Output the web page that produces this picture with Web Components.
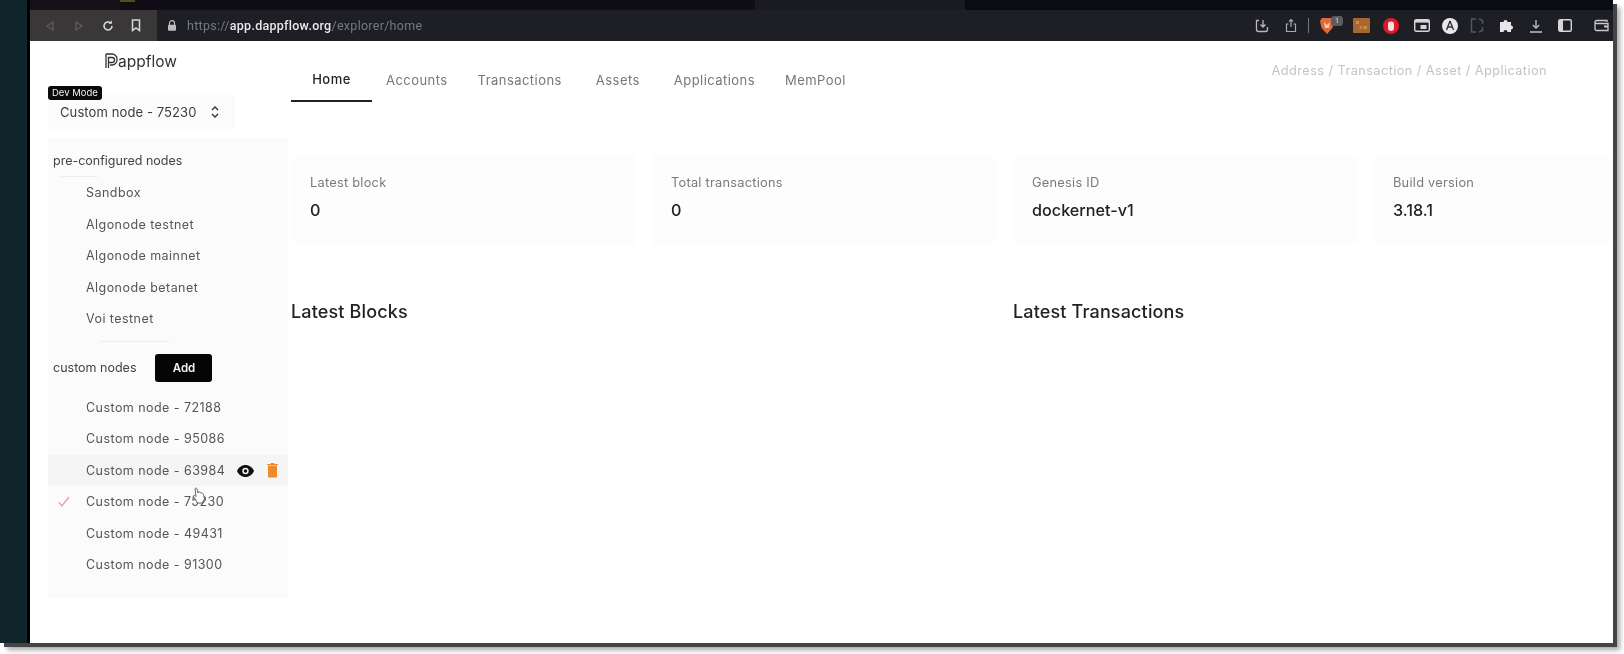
<!DOCTYPE html>
<html lang="en">
<head>
<meta charset="utf-8">
<title>Dappflow explorer</title>
<style>
  html, body { margin: 0; background: #fff; }
  body { font-family: Inter, "Liberation Sans", sans-serif; width: 1624px; height: 654px; overflow: hidden; }
</style>
</head>
<body>
<app-frame>
  <browser-bar></browser-bar>
  <side-bar slot="side">
    <dapp-logo></dapp-logo>
    <node-select>Custom node - 75230</node-select>
    <node-panel>
      <span slot="preset-title">pre-configured nodes</span>
      <node-item slot="preset">Sandbox</node-item>
      <node-item slot="preset">Algonode testnet</node-item>
      <node-item slot="preset">Algonode mainnet</node-item>
      <node-item slot="preset">Algonode betanet</node-item>
      <node-item slot="preset">Voi testnet</node-item>
      <span slot="custom-title">custom nodes</span>
      <node-item>Custom node - 72188</node-item>
      <node-item>Custom node - 95086</node-item>
      <node-item hovered>Custom node - 63984</node-item>
      <node-item selected>Custom node - 75230</node-item>
      <node-item>Custom node - 49431</node-item>
      <node-item>Custom node - 91300</node-item>
    </node-panel>
  </side-bar>
  <explorer-home slot="main"></explorer-home>
</app-frame>

<script>
class AppFrame extends HTMLElement {
  constructor() {
    super();
    this.attachShadow({ mode: 'open' });
    this.shadowRoot.innerHTML = `
      <style>
        :host { display: block; width: 1613px; height: 643px; box-shadow: 4px 4px 0 #444, 7px 7px 5px rgba(0,0,0,.35); }
        .screen { display: flex; height: 100%; overflow: hidden; filter: blur(.4px); }
        .strip { width: 27px; flex: none; background: #10252b; border-right: 3px solid #000; }
        .window { flex: 1; min-width: 0; display: flex; flex-direction: column; background: #fff; }
        .body { flex: 1; min-height: 0; display: flex; }
      </style>
      <div class="screen">
        <div class="strip"></div>
        <div class="window">
          <slot></slot>
          <div class="body">
            <slot name="side"></slot>
            <slot name="main"></slot>
          </div>
        </div>
      </div>`;
  }
}
customElements.define('app-frame', AppFrame);

class BrowserBar extends HTMLElement {
  constructor() {
    super();
    this.attachShadow({ mode: 'open' });
    this.shadowRoot.innerHTML = `
      <style>
        :host { display: block; height: 41px; background: #0d0e13; filter: blur(.5px); }
        .tabs { height: 10px; display: flex; }
        .tabs i { display: block; height: 100%; }
        .bar { height: 31px; display: flex; align-items: center; background: #1e1f25; }
        .nav { width: 127px; height: 100%; flex: none; display: flex; align-items: center; background: #3a3739; }
        .url { font: 12.500px Roboto, sans-serif; letter-spacing: .28px; color: #77787c; margin-left: 10px; white-space: nowrap; }
        .url b { font-weight: 500; color: #e8e8ea; }
        svg { display: block; flex: none; }
        .tools { margin-left: auto; display: flex; align-items: center; padding-right: 4px; }
        .sep { width: 1px; height: 15px; background: #77787c; }
      </style>
      <div class="tabs">
        <i style="width:90px;background:#15101a"></i><i style="width:15px;background:#5a4a1e;height:2px"></i>
        <i style="width:620px;background:#100d16"></i><i style="width:210px;background:#1a1b20"></i>
        <i style="flex:1;background:#0b0c12"></i>
      </div>
      <div class="bar">
        <div class="nav">
          <svg style="margin-left:14px" width="12" height="12" viewBox="0 0 12 12" fill="none" stroke="#5c5a5c" stroke-width="1.4"><path d="M9 2 3 6l6 4z"/></svg>
          <svg style="margin-left:17px" width="12" height="12" viewBox="0 0 12 12" fill="none" stroke="#5c5a5c" stroke-width="1.4"><path d="M3 2l6 4-6 4z"/></svg>
          <svg style="margin-left:17px" width="12" height="12" viewBox="0 0 12 12" fill="none" stroke="#d8d8da" stroke-width="1.6"><path d="M10 6a4 4 0 1 1-1.3-3"/><path d="M9.5 .8v2.6H6.9" fill="#d8d8da" stroke-width=".8"/></svg>
          <svg style="margin-left:17px" width="10" height="13" viewBox="0 0 10 13" fill="none" stroke="#d8d8da" stroke-width="1.5"><path d="M1.5 1h7v10.5L5 9l-3.500 2.500z"/></svg>
        </div>
        <svg style="margin-left:10px" width="10" height="11" viewBox="0 0 10 11"><path d="M2.500 5V3.200a2.500 2.500 0 0 1 5 0V5" fill="none" stroke="#bdbdc0" stroke-width="1.200"/><rect x="1" y="4.700" width="8" height="6" rx="1" fill="#bdbdc0"/></svg>
        <div class="url">https://<b>app.dappflow.org</b>/explorer/home</div>
        <div class="tools">
          <svg width="14" height="14" viewBox="0 0 14 14" fill="none" stroke="#b9b9bc" stroke-width="1.300"><path d="M4 1.500H1.500v9a2 2 0 0 0 2 2h7a2 2 0 0 0 2-2V8"/><path d="M8 1v6.500M5.500 5.500 8 8l2.500-2.500"/></svg>
          <svg style="margin-left:16px" width="12" height="15" viewBox="0 0 12 15" fill="none" stroke="#a9a9ac" stroke-width="1.200"><path d="M3.500 6H1.500v7.500h9V6h-2"/><path d="M6 9V1.500M4 3.500l2-2 2 2"/></svg>
          <div class="sep" style="margin-left:11px"></div>
          <svg style="margin-left:10px" width="16" height="18" viewBox="0 0 16 18"><path d="M3 1h10l2 3-1.500 7L8 17l-5.500-6L1 4z" fill="#e2683a"/><path d="M5 5l3 3 3-3-1 6H6z" fill="#f3cdb8"/></svg>
          <div style="width:12px;height:10px;margin:-10px 0 0 -4px;border-radius:3px;background:#5b5c62;color:#ddd;font:8px/10px Roboto,sans-serif;text-align:center">1</div>
          <svg style="margin-left:10px" width="17" height="15" viewBox="0 0 17 15"><rect width="17" height="15" rx="1" fill="#a8672f"/><path d="M3 3h3v3H3zM10 8h4v3h-4zM6 9l2 3 1-5z" fill="#cf8a45"/></svg>
          <svg style="margin-left:13px" width="16" height="16" viewBox="0 0 16 16"><circle cx="8" cy="8" r="8" fill="#e0182b"/><path d="M5 5.500a3 2 0 0 1 6 0V10a3 3 0 0 1-6 0z" fill="#f6dede"/></svg>
          <svg style="margin-left:15px" width="16" height="13" viewBox="0 0 16 13"><rect x=".7" y=".7" width="14.600" height="11.600" rx="1.500" fill="none" stroke="#d6d6d8" stroke-width="1.400"/><rect x="1" y="1" width="14" height="2.600" fill="#d6d6d8"/><rect x="6.500" y="6" width="6" height="4" fill="#d6d6d8"/></svg>
          <svg style="margin-left:12px" width="16" height="16" viewBox="0 0 16 16"><circle cx="8" cy="8" r="8" fill="#e8e8ea"/><path d="M8 3 4.500 12M8 3l3.500 9M6 9h4" fill="none" stroke="#2a2b30" stroke-width="1.300"/></svg>
          <svg style="margin-left:12px" width="14" height="15" viewBox="0 0 14 15" fill="none" stroke="#55565b" stroke-width="1.500"><path d="M6 1H1.500v13H6M9 1l3.500 1.500V6M12.500 9v3.500L9 14"/></svg>
          <svg style="margin-left:15px" width="15" height="15" viewBox="0 0 15 15"><path d="M1 4h3.500a2 2 0 1 1 4 0H12v3.500a2 2 0 1 1 0 4V14H8.500a2 2 0 1 0-4 0H1z" fill="#e6e6e8"/></svg>
          <svg style="margin-left:15px" width="14" height="14" viewBox="0 0 14 14" fill="none" stroke="#c2c2c5" stroke-width="1.300"><path d="M7 1v8M3.800 6 7 9.200 10.200 6M1 13h12"/></svg>
          <svg style="margin-left:15px" width="14" height="13" viewBox="0 0 14 13"><rect x=".7" y=".7" width="12.600" height="11.600" rx="1.500" fill="none" stroke="#d6d6d8" stroke-width="1.400"/><rect x="1" y="1" width="4" height="11" fill="#d6d6d8"/></svg>
          <svg style="margin-left:22px" width="15" height="13" viewBox="0 0 15 13" fill="none" stroke="#c9c9cc" stroke-width="1.300"><path d="M13 3V1.500H2.500a1.500 1.500 0 0 0 0 3H14v7H2.500A1.500 1.500 0 0 1 1 10V3"/><path d="M10 7.500h4" stroke-width="2"/></svg>
        </div>
      </div>`;
  }
}
customElements.define('browser-bar', BrowserBar);

class SideBar extends HTMLElement {
  constructor() {
    super();
    this.attachShadow({ mode: 'open' });
    this.shadowRoot.innerHTML = `
      <style>
        :host { display: flex; flex-direction: column; width: 260px; flex: none; }
      </style>
      <slot></slot>`;
  }
}
customElements.define('side-bar', SideBar);

class DappLogo extends HTMLElement {
  constructor() {
    super();
    this.attachShadow({ mode: 'open' });
    this.shadowRoot.innerHTML = `
      <style>
        :host { display: flex; align-items: center; height: 40px; padding-left: 75px; font-size: 15.500px; color: #333; }
        svg { display: block; margin-right: 0; }
      </style>
      <svg width="13" height="16" viewBox="0 0 13 16" fill="none" stroke="#333" stroke-width="1.300">
        <path d="M1 1h6a5 5 0 0 1 5 5v1a5 5 0 0 1-5 5H5"/><path d="M1 1v14M3.500 15V4.500h3.500a2.500 2.500 0 0 1 0 5H3.500"/>
      </svg>
      <span>appflow</span>`;
  }
}
customElements.define('dapp-logo', DappLogo);

class NodeSelect extends HTMLElement {
  constructor() {
    super();
    this.attachShadow({ mode: 'open' });
    this.shadowRoot.innerHTML = `
      <style>
        :host { display: flex; align-items: center; position: relative; margin: 14px 0 9px 18px; width: 175px; height: 34px; padding-left: 12px; background: #fbfbfb; font-size: 13px; letter-spacing: .1px; color: #3c3c3c; white-space: nowrap; }
        .badge { position: absolute; left: 0; top: -9px; padding: 0 4px; height: 14px; line-height: 14px; border-radius: 3px; background: #0a0a0a; color: #eee; font-size: 9.500px; letter-spacing: 0; }
        svg { display: block; margin-left: 14px; }
      </style>
      <span class="badge">Dev Mode</span>
      <slot></slot>
      <svg width="8" height="14" viewBox="0 0 8 14" fill="none" stroke="#333" stroke-width="1.400"><path d="M1 5l3-3 3 3M1 9l3 3 3-3"/></svg>`;
  }
}
customElements.define('node-select', NodeSelect);

class NodePanel extends HTMLElement {
  constructor() {
    super();
    this.attachShadow({ mode: 'open' });
    this.shadowRoot.innerHTML = `
      <style>
        :host { display: block; width: 240px; margin-left: 18px; height: 460px; padding-top: 12px; box-sizing: border-box; background: #fbfbfb; color: #444; font-size: 12.500px; }
        .title { display: block; padding-left: 5px; line-height: 22px; }
        .line { height: 1px; background: #eeeeee; }
        .custom { display: flex; align-items: center; height: 28px; padding-left: 5px; gap: 19px; margin: 12px 0 10px; }
        button { width: 57px; height: 28px; border: 0; border-radius: 3px; background: #050505; color: #f2f2f2; font: 600 11.500px Inter, sans-serif; }
      </style>
      <div class="title"><slot name="preset-title"></slot></div>
      <div class="line" style="width:38px;margin:4px 0 0 12px"></div>
      <slot name="preset"></slot>
      <div class="line" style="width:70px;margin:6px 0 0 52px"></div>
      <div class="custom"><slot name="custom-title"></slot><button>Add</button></div>
      <slot></slot>`;
  }
}
customElements.define('node-panel', NodePanel);

class NodeItem extends HTMLElement {
  constructor() {
    super();
    this.attachShadow({ mode: 'open' });
  }
  connectedCallback() {
    const hovered = this.hasAttribute('hovered');
    const selected = this.hasAttribute('selected');
    this.shadowRoot.innerHTML = `
      <style>
        :host { display: flex; align-items: center; height: 31.500px; font-size: 12.500px; letter-spacing: .45px; color: #555; white-space: nowrap; position: relative; }
        :host([hovered]) { background: #f5f5f5; }
        .lead { width: 38px; flex: none; display: flex; padding-left: 10px; box-sizing: border-box; }
        .eye { position: absolute; left: 189px; top: 10px; }
        .trash { position: absolute; left: 219px; top: 8px; }
        .cursor { position: absolute; left: 144px; top: 32px; z-index: 2; }
        svg { display: block; }
      </style>
      <span class="lead">${selected ? '<svg width="12" height="11" viewBox="0 0 12 11" fill="none" stroke="#e6a0a5" stroke-width="1.300"><path d="M1 6.500 3.800 10 11 1"/></svg>' : ''}</span>
      <slot></slot>
      ${hovered ? `
        <svg class="eye" width="17" height="12" viewBox="0 0 17 12"><path d="M8.500 0C4.700 0 1.500 2.400 0 6c1.500 3.600 4.700 6 8.500 6s7-2.400 8.500-6C15.500 2.400 12.300 0 8.500 0z" fill="#111"/><circle cx="8.500" cy="6" r="3.200" fill="#f3f3f3"/><circle cx="8.500" cy="6" r="1.700" fill="#111"/></svg>
        <svg class="trash" width="11" height="15" viewBox="0 0 11 15"><path d="M1 2.500h9v11a1 1 0 0 1-1 1H2a1 1 0 0 1-1-1zM0 1h3.500l.5-1h3l.5 1H11v1H0z" fill="#ee8a2c"/></svg>
        <svg class="cursor" width="14" height="17" viewBox="0 0 14 17"><path d="M3 1.500c.8-.8 1.800-.3 2 .5l1 4 .5-1c1-.4 1.500 0 1.700.7.800-.4 1.400 0 1.600.7.800-.3 1.500.2 1.700 1L12.500 12 10 16H5.500L1.500 9.500c-.3-1 .7-1.500 1.500-1l1 1z" fill="#fff" stroke="#555" stroke-width=".9"/></svg>` : ''}`;
  }
}
customElements.define('node-item', NodeItem);

class StatCard extends HTMLElement {
  constructor() {
    super();
    this.attachShadow({ mode: 'open' });
  }
  connectedCallback() {
    this.shadowRoot.innerHTML = `
      <style>
        :host { display: block; height: 90px; padding: 19px 0 0 19px; box-sizing: border-box; background: #fefdfe; }
        .label { font-size: 12.800px; letter-spacing: .25px; line-height: 18px; color: #7a7a7a; }
        .value { font-size: 16.200px; font-weight: 500; line-height: 20px; margin-top: 8px; color: #222; }
      </style>
      <div class="label">${this.getAttribute('label')}</div>
      <div class="value">${this.getAttribute('value')}</div>`;
  }
}
customElements.define('stat-card', StatCard);

class ExplorerHome extends HTMLElement {
  constructor() {
    super();
    this.attachShadow({ mode: 'open' });
    this.shadowRoot.innerHTML = `
      <style>
        :host { display: block; flex: 1; min-width: 0; overflow: hidden; padding-left: 1px; box-sizing: border-box; }
        header { display: flex; justify-content: space-between; height: 61px; margin-top: 0; }
        nav { display: flex; margin-top: 17px; height: 44px; font-size: 13px; letter-spacing: .45px; color: #777; }
        nav a { display: flex; align-items: center; margin-left: 30px; white-space: nowrap; }
        nav a.on { margin-left: 0; width: 81px; justify-content: center; margin-right: -16px; height: 44px; box-sizing: border-box; border-bottom: 2px solid #222; color: #222; font-weight: 500; }
        .search { margin: 21px 66px 0 0; font-size: 12.800px; letter-spacing: .4px; line-height: 18px; color: #c4c4c6; white-space: nowrap; }
        .stats, .titles { display: grid; grid-template-columns: repeat(4, 345px); gap: 16px; }
        .stats { margin-top: 53px; }
        .titles { grid-template-columns: repeat(2, 706px); margin-top: 54px; }
        h2 { margin: 0; font-size: 18px; letter-spacing: .15px; font-weight: 500; line-height: 26px; color: #222; }
      </style>
      <header>
        <nav>
          <a class="on">Home</a><a>Accounts</a><a>Transactions</a><a style="margin-left:34px">Assets</a><a style="margin-left:34px">Applications</a><a>MemPool</a>
        </nav>
        <div class="search">Address / Transaction / Asset / Application</div>
      </header>
      <div class="stats">
        <stat-card label="Latest block" value="0"></stat-card>
        <stat-card label="Total transactions" value="0"></stat-card>
        <stat-card label="Genesis ID" value="dockernet-v1"></stat-card>
        <stat-card label="Build version" value="3.18.1"></stat-card>
      </div>
      <div class="titles">
        <h2>Latest Blocks</h2>
        <h2>Latest Transactions</h2>
      </div>`;
  }
}
customElements.define('explorer-home', ExplorerHome);
</script>
</body>
</html>
